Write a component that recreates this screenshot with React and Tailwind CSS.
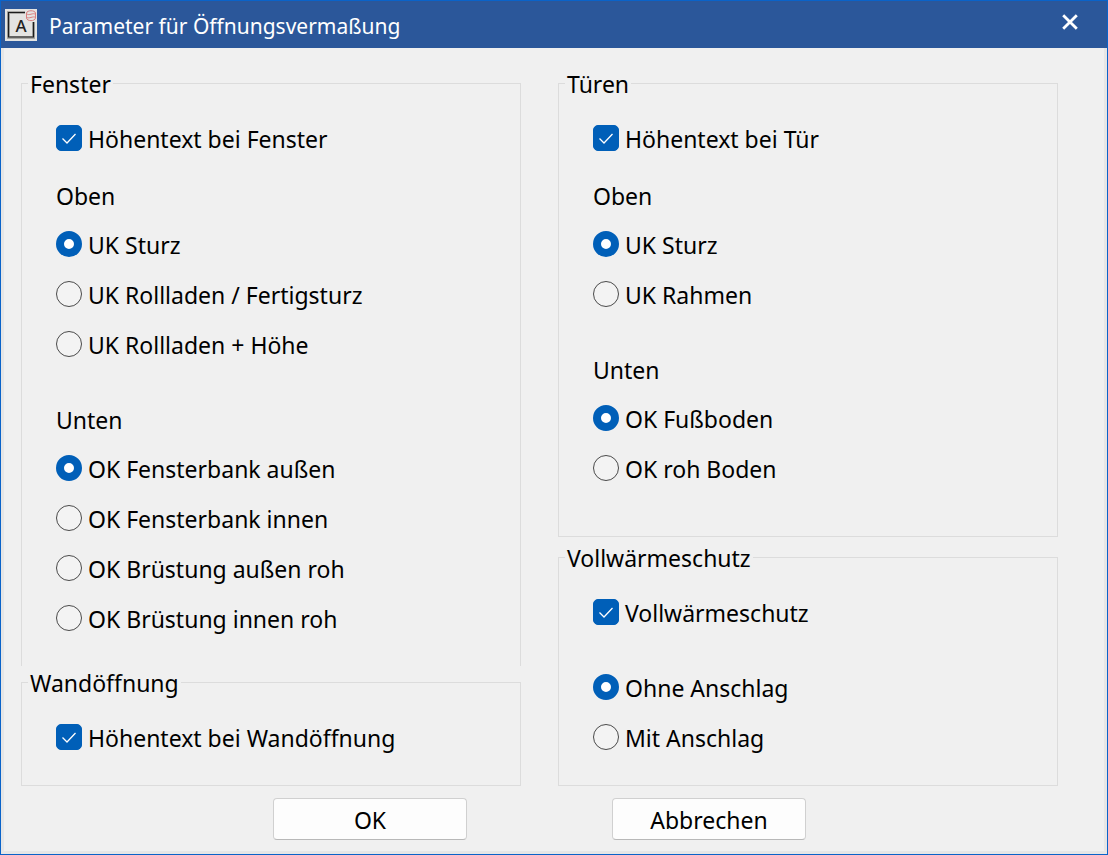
import { useState } from "react";

function CheckRow({ label, defaultChecked = true }) {
  return (
    <label className="flex items-center gap-1.5 h-[50px]">
      <span className="grid place-items-center shrink-0">
        <input
          type="checkbox"
          defaultChecked={defaultChecked}
          className="peer col-start-1 row-start-1 appearance-none w-[26px] h-[26px] rounded-[5px] border border-[#626262] bg-[#f5f5f5] checked:border-[#005fb8] checked:bg-[#005fb8]"
        />
        <svg
          viewBox="0 0 26 26"
          className="col-start-1 row-start-1 w-[26px] h-[26px] pointer-events-none invisible peer-checked:visible"
        >
          <path d="M6.5 13.5 L11 18 L19.5 9" fill="none" stroke="#fff" strokeWidth="1.3" />
        </svg>
      </span>
      <span className="pt-0.5">{label}</span>
    </label>
  );
}

function RadioRow({ name, label, checked, onChange }) {
  return (
    <label className="flex items-center gap-1.5 h-[50px]">
      <input
        type="radio"
        name={name}
        checked={checked}
        onChange={onChange}
        className="appearance-none shrink-0 w-[26px] h-[26px] rounded-full border border-[#4a4a4a] bg-[#f3f3f3] checked:border-8 checked:border-[#005fb8] checked:bg-white"
      />
      <span className="pt-0.5">{label}</span>
    </label>
  );
}

function RadioList({ name, options }) {
  const [selected, setSelected] = useState(options[0]);

  return (
    <div role="radiogroup" aria-label={name}>
      {options.map((o) => (
        <RadioRow
          key={o}
          name={name}
          label={o}
          checked={selected === o}
          onChange={() => setSelected(o)}
        />
      ))}
    </div>
  );
}

function Group({ title, className = "", children }) {
  return (
    <fieldset className={`border border-[#dcdcdc] min-w-0 pl-[34px] ${className}`}>
      <legend className="h-8 leading-8 px-0.5 pt-px -ml-7">{title}</legend>
      <div className="pt-3.5">{children}</div>
    </fieldset>
  );
}

function SubTitle({ children }) {
  return <div className="flex items-center h-14 pt-2.5">{children}</div>;
}

function AppIcon() {
  return (
    <svg viewBox="0 0 32 32" className="w-8 h-8 shrink-0">
      <rect width="32" height="32" fill="#e4e4e2" />
      <path d="M20 3.5 H3.5 V28.5 H28.5 V13" fill="none" stroke="#a9a9a6" strokeWidth="3" />
      <path d="M20 3.5 H3.5 V28 H28.5 V13" fill="none" stroke="#1c1c1c" strokeWidth="1.2" />
      <text
        x="16"
        y="23"
        textAnchor="middle"
        fill="#222"
        className="text-[17px] font-medium font-['Noto_Sans',sans-serif]"
      >
        A
      </text>
      <g fill="none" stroke="#d98080" strokeWidth="1">
        <path d="M21.5 4 C22 1 30 1 30.5 4 V9 C30 12.5 22 12.5 21.5 9 Z" />
        <path d="M21.5 4.5 C24 7.5 28 3 30.5 5.5 M21.5 8 C24 10.5 28 6.5 30.5 8.5" />
      </g>
    </svg>
  );
}

const buttonClass =
  "w-[194px] h-[42px] rounded-[4px] border border-[#d0d0d0] border-b-[#b8b8b8] bg-[#fdfdfd] pt-0.5";

export default function App() {
  return (
    <div className="min-h-screen flex flex-col border border-[#0a63c9] bg-[#f0f0f0] text-black text-[23px] leading-8 font-['Noto_Sans','Open_Sans',sans-serif]">
      <header className="flex items-center h-[47px] pl-1 pr-[29px] bg-[#2b579a] text-white">
        <AppIcon />
        <h1 className="flex-1 pl-3 pt-0.5 text-[21px]">Parameter für Öffnungsvermaßung</h1>
        <button type="button" aria-label="Schließen" className="pb-1.5">
          <svg viewBox="0 0 16 16" className="w-4 h-4">
            <path d="M1.2 1.2 L14.8 14.8 M14.8 1.2 L1.2 14.8" stroke="#fff" strokeWidth="2.8" />
          </svg>
        </button>
      </header>

      <form
        onSubmit={(e) => e.preventDefault()}
        className="flex-1 border-[3px] border-t-0 border-[#e6e6e6] pt-[19px] pl-[17px] pr-[46px]"
      >
        <div className="grid grid-cols-2 gap-[37px]">
          <div className="flex flex-col">
            <Group title="Fenster" className="border-b-0 pb-[23px]">
              <CheckRow label="Höhentext bei Fenster" />
              <SubTitle>Oben</SubTitle>
              <RadioList
                name="fenster-oben"
                options={["UK Sturz", "UK Rollladen / Fertigsturz", "UK Rollladen + Höhe"]}
              />
              <div className="mt-[18px]">
                <SubTitle>Unten</SubTitle>
                <RadioList
                  name="fenster-unten"
                  options={[
                    "OK Fensterbank außen",
                    "OK Fensterbank innen",
                    "OK Brüstung außen roh",
                    "OK Brüstung innen roh",
                  ]}
                />
              </div>
            </Group>
            <Group title="Wandöffnung" className="pb-[23px]">
              <CheckRow label="Höhentext bei Wandöffnung" />
            </Group>
          </div>

          <div className="flex flex-col gap-1">
            <Group title="Türen" className="flex-1">
              <CheckRow label="Höhentext bei Tür" />
              <SubTitle>Oben</SubTitle>
              <RadioList name="tueren-oben" options={["UK Sturz", "UK Rahmen"]} />
              <div className="mt-[18px]">
                <SubTitle>Unten</SubTitle>
                <RadioList name="tueren-unten" options={["OK Fußboden", "OK roh Boden"]} />
              </div>
            </Group>
            <Group title="Vollwärmeschutz" className="pb-[23px]">
              <CheckRow label="Vollwärmeschutz" />
              <div className="mt-[25px]">
                <RadioList name="anschlag" options={["Ohne Anschlag", "Mit Anschlag"]} />
              </div>
            </Group>
          </div>
        </div>

        <div className="flex justify-center gap-[145px] pt-3 pb-2">
          <button type="submit" className={buttonClass}>OK</button>
          <button type="button" className={buttonClass}>Abbrechen</button>
        </div>
      </form>
    </div>
  );
}
